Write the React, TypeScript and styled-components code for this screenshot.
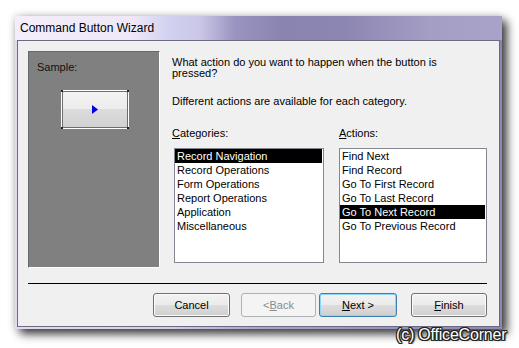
import React from "react";
import styled, { createGlobalStyle } from "styled-components";

const Global = createGlobalStyle`
  html, body { margin: 0; padding: 0; background: #ffffff; }
  body { font-family: "Liberation Sans", Arial, sans-serif; }
`;

const Page = styled.div`
  position: relative;
  width: 519px;
  height: 348px;
  overflow: hidden;
  padding: 16px 0 0 15px;
  box-sizing: border-box;
`;

const Window = styled.div`
  width: 487px;
  display: flex;
  flex-direction: column;
  padding: 0 2px 2px 2px;
  box-sizing: border-box;
  background: linear-gradient(to right, #e4daf0 0%, #d9cde9 30%, #aaa3cb 50%, #9a93bf 75%, #8c86b4 100%);
  box-shadow: 5px 5px 9px rgba(0, 0, 0, 0.75), 0 0 8px rgba(0, 0, 0, 0.18);
`;

const TitleBar = styled.div`
  height: 24px;
  margin: 0 -2px;
  padding-left: 5px;
  display: flex;
  align-items: center;
  font-size: 12px;
  color: #000;
  background: linear-gradient(
    to right,
    #f3eef9 0%,
    #efe8f8 24%,
    #cfd1ef 32%,
    #cbc7e6 38%,
    #9a95c0 45%,
    #8a85b0 55%,
    #8c86b2 68%,
    #a49ec5 85%,
    #a9a3c9 100%
  );
  white-space: nowrap;
`;

const Client = styled.div`
  border: 1px solid #6d6a80;
  background: #f0f0f0;
  padding: 10px 12px 9px 10px;
  display: flex;
  flex-direction: column;
  font-size: 11px;
  color: #000;
`;

const TopRow = styled.div`
  display: flex;
  align-items: flex-start;
`;

const SamplePanel = styled.div`
  width: 132px;
  height: 217px;
  box-sizing: border-box;
  background: #808080;
  border-top: 1px solid #696969;
  border-left: 1px solid #696969;
  border-right: 1px solid #ffffff;
  border-bottom: 1px solid #ffffff;
  display: flex;
  flex-direction: column;
  padding: 10px 0 0 8px;
`;

const SampleLabel = styled.div`
  line-height: 11px;
  color: #101010;
`;

const SampleButtonFrame = styled.div`
  margin: 17px 0 0 24px;
  width: 68px;
  height: 39px;
  box-sizing: border-box;
  border: 1px solid #ffffff;
  background: #ffffff;
  position: relative;
`;

const Corner = styled.span<{ $pos: "tl" | "tr" | "bl" | "br" }>`
  position: absolute;
  width: 2px;
  height: 2px;
  background: #202020;
  ${(p) => (p.$pos[0] === "t" ? "top: -1px;" : "bottom: -1px;")}
  ${(p) => (p.$pos[1] === "l" ? "left: -1px;" : "right: -1px;")}
`;

const SampleButtonFace = styled.div`
  width: 100%;
  height: 100%;
  box-sizing: border-box;
  border: 1px solid #6e6e6e;
  border-radius: 2px;
  background: linear-gradient(#f3f3f3 0%, #ececec 49%, #dcdcdc 50%, #d2d2d2 100%);
  display: flex;
  align-items: center;
  justify-content: center;
`;

const RightCol = styled.div`
  margin-left: 12px;
  display: flex;
  flex-direction: column;
`;

const Prompt = styled.p<{ $top: number }>`
  margin: ${(p) => p.$top}px 0 0 0;
  line-height: 11px;
  width: 300px;
`;

const ListsRow = styled.div`
  margin-top: 21px;
  display: flex;
  gap: 15px;
`;

const ListGroup = styled.div`
  display: flex;
  flex-direction: column;
`;

const Label = styled.div`
  line-height: 11px;
  margin-bottom: 9px;
`;

const Accel = styled.span`
  text-decoration: underline;
  text-underline-offset: 1px;
`;

const ListBox = styled.div<{ $w: number; $indent?: number }>`
  width: ${(p) => p.$w}px;
  margin-left: ${(p) => p.$indent ?? 0}px;
  height: 115px;
  box-sizing: border-box;
  border: 1px solid #828790;
  background: #ffffff;
  padding: 0 1px 0 0;
`;

const ListItem = styled.div<{ $sel?: boolean }>`
  height: 14px;
  line-height: 14px;
  padding-left: 2px;
  white-space: nowrap;
  background: ${(p) => (p.$sel ? "#000000" : "transparent")};
  color: ${(p) => (p.$sel ? "#ffffff" : "#000000")};
`;

const Separator = styled.div`
  margin-top: 15px;
  height: 1px;
  background: #000000;
`;

const ButtonRow = styled.div`
  margin-top: 9px;
  display: flex;
  justify-content: flex-end;
`;

type Kind = "normal" | "default" | "disabled";

const Btn = styled.div<{ $w: number; $ml: number; $kind: Kind }>`
  width: ${(p) => p.$w}px;
  margin-left: ${(p) => p.$ml}px;
  height: 24px;
  box-sizing: border-box;
  border-radius: 3px;
  display: flex;
  align-items: center;
  justify-content: center;
  border: 1px solid
    ${(p) => (p.$kind === "default" ? "#3c7fb1" : p.$kind === "disabled" ? "#adb2b5" : "#707070")};
  color: ${(p) => (p.$kind === "disabled" ? "#8a8a8a" : "#000")};
  background: ${(p) =>
    p.$kind === "disabled"
      ? "#f4f4f4"
      : "linear-gradient(#f2f2f2 0%, #ebebeb 50%, #dddddd 51%, #cfcfcf 100%)"};
  box-shadow: inset 0 0 0 1px
    ${(p) => (p.$kind === "default" ? "#8ed6f8" : p.$kind === "disabled" ? "#f4f4f4" : "#fbfbfb")};
`;

const Watermark = styled.div`
  position: absolute;
  left: 396px;
  top: 325px;
  font-family: "Liberation Sans", Arial, sans-serif;
  font-size: 16px;
  line-height: 20px;
  color: #ffffff;
  letter-spacing: -0.2px;
  text-shadow: 1px 0 0 #222, -1px 0 0 #222, 0 1px 0 #222, 0 -1px 0 #222, 1px 1px 0 #222,
    -1px -1px 0 #222, 1px -1px 0 #222, -1px 1px 0 #222, 2px 1px 1px #555;
`;

const categories = [
  "Record Navigation",
  "Record Operations",
  "Form Operations",
  "Report Operations",
  "Application",
  "Miscellaneous",
];

const actions = [
  "Find Next",
  "Find Record",
  "Go To First Record",
  "Go To Last Record",
  "Go To Next Record",
  "Go To Previous Record",
];

export default function App() {
  return (
    <Page>
      <Global />
      <Window>
        <TitleBar>Command Button Wizard</TitleBar>
        <Client>
          <TopRow>
            <SamplePanel>
              <SampleLabel>Sample:</SampleLabel>
              <SampleButtonFrame>
                <Corner $pos="tl" />
                <Corner $pos="tr" />
                <Corner $pos="bl" />
                <Corner $pos="br" />
                <SampleButtonFace>
                  <svg width="6" height="9" viewBox="0 0 6 9">
                    <path d="M0 0 L6 4.5 L0 9 Z" fill="#0000e8" />
                  </svg>
                </SampleButtonFace>
              </SampleButtonFrame>
            </SamplePanel>
            <RightCol>
              <Prompt $top={6}>
                What action do you want to happen when the button is pressed?
              </Prompt>
              <Prompt $top={17}>Different actions are available for each category.</Prompt>
              <ListsRow>
                <ListGroup>
                  <Label>
                    <Accel>C</Accel>ategories:
                  </Label>
                  <ListBox $w={150} $indent={2}>
                    {categories.map((c, i) => (
                      <ListItem key={c} $sel={i === 0}>
                        {c}
                      </ListItem>
                    ))}
                  </ListBox>
                </ListGroup>
                <ListGroup>
                  <Label>
                    <Accel>A</Accel>ctions:
                  </Label>
                  <ListBox $w={148}>
                    {actions.map((a, i) => (
                      <ListItem key={a} $sel={i === 4}>
                        {a}
                      </ListItem>
                    ))}
                  </ListBox>
                </ListGroup>
              </ListsRow>
            </RightCol>
          </TopRow>
          <Separator />
          <ButtonRow>
            <Btn $w={77} $ml={0} $kind="normal">Cancel</Btn>
            <Btn $w={75} $ml={11} $kind="disabled">
              &lt; <Accel>B</Accel>ack
            </Btn>
            <Btn $w={78} $ml={3} $kind="default">
              <Accel>N</Accel>ext &gt;
            </Btn>
            <Btn $w={76} $ml={14} $kind="normal">
              <Accel>F</Accel>inish
            </Btn>
          </ButtonRow>
        </Client>
      </Window>
      <Watermark>(c) OfficeCorner</Watermark>
    </Page>
  );
}
